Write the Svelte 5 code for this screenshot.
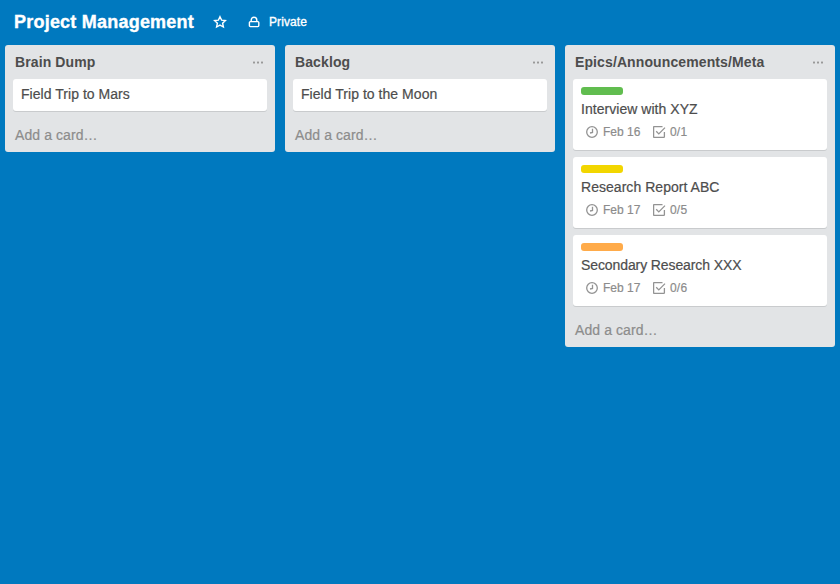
<script>
  const lists = [
    { title: 'Brain Dump', cards: [{ title: 'Field Trip to Mars' }] },
    { title: 'Backlog', cards: [{ title: 'Field Trip to the Moon' }] },
    {
      title: 'Epics/Announcements/Meta',
      cards: [
        { title: 'Interview with XYZ', label: 'green', due: 'Feb 16', checks: '0/1' },
        { title: 'Research Report ABC', label: 'yellow', due: 'Feb 17', checks: '0/5' },
        { title: 'Secondary Research XXX', label: 'orange', due: 'Feb 17', checks: '0/6', tight: true }
      ]
    }
  ];
</script>

<div class="board">
  <header>
    <h1>Project Management</h1>
    <svg class="star" width="14" height="14" viewBox="0 0 14 14" aria-hidden="true">
      <path d="M7 1.7 8.6 5.1 12.4 5.6 9.6 8.2 10.4 12 7 10.1 3.6 12 4.4 8.2 1.6 5.6 5.4 5.1Z" />
    </svg>
    <svg class="lock" width="12" height="12" viewBox="0 0 12 12" aria-hidden="true">
      <path d="M3.2 5.6V4.2a2.8 3 0 0 1 5.6 0v1.4" />
      <rect x="1.4" y="5.6" width="9.4" height="5" rx="1" />
    </svg>
    <span class="visibility">Private</span>
  </header>

  <main>
    {#each lists as list}
      <section class="list">
        <div class="list-head">
          <h2>{list.title}</h2>
          <svg width="10" height="3" viewBox="0 0 10 3" aria-hidden="true">
            <rect x="0" y=".5" width="2" height="2" rx=".5" />
            <rect x="4" y=".5" width="2" height="2" rx=".5" />
            <rect x="8" y=".5" width="2" height="2" rx=".5" />
          </svg>
        </div>
        <div class="cards">
          {#each list.cards as card}
            <article class="card" class:labelled={card.label}>
              {#if card.label}<div class="label {card.label}"></div>{/if}
              <div class="card-title" class:tight={card.tight}>{card.title}</div>
              {#if card.due}
                <div class="badges">
                  <svg width="12" height="12" viewBox="0 0 12 12" aria-hidden="true">
                    <circle cx="6" cy="6" r="5.3" />
                    <path d="M6.5 2.8V6.5L4 7" />
                  </svg>
                  <span class="due">{card.due}</span>
                  <svg width="13" height="12" viewBox="0 0 13 12" aria-hidden="true">
                    <path d="M9.5 .6H1.3Q.6.6.6 1.3V10.7Q.6 11.4 1.3 11.4H10.7Q11.4 11.4 11.4 10.7V6" />
                    <path d="M3.2 5.2 5.8 7.9 12 1.6" />
                  </svg>
                  <span class="checks">{card.checks}</span>
                </div>
              {/if}
            </article>
          {/each}
        </div>
        <div class="add">Add a card…</div>
      </section>
    {/each}
  </main>
</div>

<style>
  :global(body) { background: #0079bf; }
  .board {
    box-sizing: border-box;
    width: 840px;
    height: 584px;
    overflow: hidden;
    background: #0079bf;
    font-family: "Liberation Sans", Arial, sans-serif;
    color: #4d4d4d;
    white-space: nowrap;
  }
  h1, h2 { margin: 0; font-weight: bold; }
  header {
    display: flex;
    align-items: center;
    box-sizing: border-box;
    height: 45px;
    padding: 0 14px 1px;
    color: #fff;
  }
  h1 { width: 180px; font-size: 18px; line-height: 24px; letter-spacing: .22px; -webkit-text-stroke: .35px; }
  header svg { fill: none; stroke: #fff; stroke-width: 1.4; }
  .star { margin-left: 19px; }
  .lock { margin-left: 21px; }
  .visibility { margin-left: 9px; font-size: 12px; line-height: 16px; letter-spacing: .08px; -webkit-text-stroke: .35px; }
  main { display: flex; align-items: flex-start; gap: 10px; padding: 0 5px; }
  .list {
    box-sizing: border-box;
    width: 270px;
    padding: 0 8px;
    border-radius: 3px;
    background: #e2e4e6;
  }
  .list-head { display: flex; justify-content: space-between; height: 34px; padding: 0 4px 0 2px; }
  .list-head svg { margin-top: 15.5px; fill: #999; }
  h2 { font-size: 14px; line-height: 34px; letter-spacing: .11px; }
  .cards { display: flex; flex-direction: column; gap: 7px; }
  .card {
    box-sizing: border-box;
    height: 32px;
    padding: 6px 8px 0;
    border-radius: 3px;
    background: #fff;
    box-shadow: 0 1px 0 #c9cbcd;
  }
  .labelled { height: 71px; padding-top: 8px; }
  .label { width: 42px; height: 8px; margin-bottom: 5px; border-radius: 3px; }
  .green { background: #61bd4f; }
  .yellow { background: #f2d600; }
  .orange { background: #ffab4a; }
  .card-title { font-size: 14px; line-height: 18px; letter-spacing: .04px; -webkit-text-stroke: .2px; }
  .tight { letter-spacing: -.1px; }
  .badges {
    display: flex;
    align-items: center;
    height: 16px;
    margin: 6px 0 0 5px;
    color: #8c8c8c;
    font-size: 12px;
    -webkit-text-stroke: .2px;
  }
  .badges svg { fill: none; stroke: #939393; stroke-width: 1.3; }
  .due { width: 46px; margin-left: 5px; }
  .due + svg { margin-left: 4px; }
  .checks { margin-left: 4px; letter-spacing: .2px; }
  .add {
    box-sizing: border-box;
    height: 41px;
    padding: 15px 2px 0;
    color: #8c8c8c;
    font-size: 14px;
    line-height: 18px;
    letter-spacing: .09px;
    -webkit-text-stroke: .2px;
  }
</style>
